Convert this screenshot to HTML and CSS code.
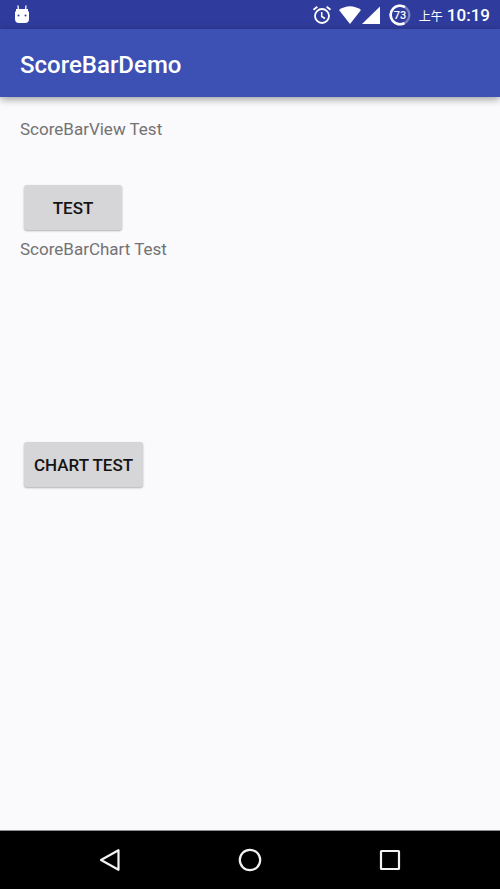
FILE: index.html
```html
<!DOCTYPE html>
<html lang="en">
<head>
<meta charset="utf-8">
<meta name="viewport" content="width=device-width, initial-scale=1">
<title>ScoreBarDemo</title>
<link rel="stylesheet" href="styles.css">
</head>
<body>
<div class="screen">
  <div class="status-bar">
    <svg class="robot" width="16" height="20" viewBox="0 0 16 20" aria-hidden="true">
      <path d="M4 1 4.500 5M12 1 11.500 5" stroke="#fff" stroke-width="1.300" stroke-linecap="round"/>
      <path d="M2 4h12v2.500h1V14q0 4-4 4H5q-4 0-4-4V6.500h1z" fill="#fff"/>
      <circle cx="4.500" cy="10.500" r="1" fill="#303f9f"/>
      <circle cx="11.500" cy="10.500" r="1" fill="#303f9f"/>
    </svg>
    <div class="indicators">
      <svg width="20" height="20" viewBox="0 0 20 20" fill="none" stroke="#fff" aria-hidden="true">
        <circle cx="10" cy="11" r="7" stroke-width="1.800"/>
        <path d="M1.500 4.800 5.300 1.700M18.500 4.800 14.700 1.700" stroke-width="1.800"/>
        <path d="M9.700 7v4.500l3.300 2" stroke-width="1.500"/>
      </svg>
      <svg class="wifi" width="24" height="20" viewBox="0 0 24 20" aria-hidden="true">
        <path d="M1 5Q12-2.500 23 5L12 19z" fill="#fff"/>
      </svg>
      <svg width="18" height="20" viewBox="0 0 18 20" aria-hidden="true">
        <path d="M18 1.500V19H0z" fill="#fff"/>
      </svg>
      <svg class="battery" width="22" height="22" viewBox="0 0 22 22" aria-hidden="true">
        <circle cx="11" cy="11" r="9.300" fill="none" stroke="#7882c4" stroke-width="2.400"/>
        <path d="M16 3.200A9.300 9.300 0 1 0 15.500 19.100" fill="none" stroke="#fff" stroke-width="2.600"/>
        <text class="battery-level" x="11" y="15" text-anchor="middle">73</text>
      </svg>
      <span class="period">上午</span>
      <span class="time">10:19</span>
    </div>
  </div>
  <header class="app-bar"><h1>ScoreBarDemo</h1></header>
  <main class="content">
    <p>ScoreBarView Test</p>
    <div class="score-bar"></div>
    <button type="button" class="action">TEST</button>
    <p>ScoreBarChart Test</p>
    <div class="score-chart"></div>
    <button type="button" class="action">CHART TEST</button>
  </main>
  <nav class="nav-bar">
    <button type="button" aria-label="Back"><svg width="24" height="24" viewBox="0 0 24 24"><path d="M20.500 2.200v19.600L3 12z"/></svg></button>
    <button type="button" aria-label="Home"><svg width="24" height="24" viewBox="0 0 24 24"><circle cx="12" cy="12" r="10.200"/></svg></button>
    <button type="button" aria-label="Overview"><svg width="24" height="24" viewBox="0 0 24 24"><rect x="3" y="3" width="18" height="18" rx="0.500"/></svg></button>
  </nav>
</div>
</body>
</html>
```
FILE: styles.css
```css
* {
  box-sizing: border-box;
}

body {
  margin: 0;
  background: #faf9fb;
  font-family: Roboto, "Noto Sans CJK SC", sans-serif;
}

.screen {
  display: flex;
  flex-direction: column;
  min-height: 100vh;
}

.status-bar {
  display: flex;
  align-items: center;
  justify-content: space-between;
  height: 29px;
  padding: 0 10px 0 14px;
  background: #303c9d;
  color: #fff;
}

svg {
  display: block;
}

.indicators {
  display: flex;
  align-items: center;
}

.wifi {
  margin-left: 6px;
}

.battery {
  margin-left: 9px;
}

.battery-level {
  fill: #fff;
  font-size: 11px;
  font-weight: 500;
}

.period {
  margin: 4px 4px 0 8px;
  font-size: 12px;
  line-height: 16px;
}

.time {
  font-size: 17px;
  font-weight: 500;
  line-height: 24px;
}

.app-bar {
  display: flex;
  align-items: center;
  height: 68px;
  padding: 4px 20px 0;
  background: #3d50b3;
  color: #fff;
  box-shadow: 0 2px 8px rgba(0, 0, 0, 0.4);
}

h1 {
  margin: 0;
  font-size: 24px;
  font-weight: 500;
  line-height: 32px;
}

.content {
  flex: 1;
  padding: 20px;
}

p {
  margin: 0;
  color: #737274;
  font-size: 17px;
  line-height: 24px;
}

.score-bar {
  height: 44px;
}

.score-chart {
  height: 181px;
}

.action {
  display: block;
  min-width: 98px;
  height: 45px;
  margin: 0 4px 7px;
  padding: 0 10px;
  border: 0;
  border-radius: 3px;
  background: #d6d5d7;
  box-shadow: 0 1px 2px rgba(0, 0, 0, 0.3);
  color: #141414;
  font-family: inherit;
  font-size: 17px;
  font-weight: 500;
}

.nav-bar {
  display: flex;
  justify-content: center;
  height: 59px;
  padding: 0 8%;
  border-top: 1px solid #8c908f;
  background: #000;
}

.nav-bar button {
  display: flex;
  flex: 1;
  align-items: center;
  justify-content: center;
  padding: 0;
  border: 0;
  background: none;
}

.nav-bar svg {
  fill: none;
  stroke: #f2f2f2;
  stroke-width: 2.2;
  stroke-linejoin: round;
}
```
